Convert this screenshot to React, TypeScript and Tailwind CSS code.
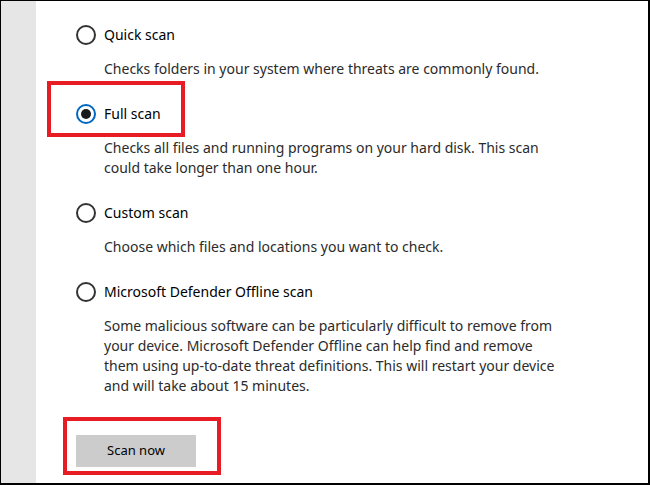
import React from 'react';

type ScanOption = {
  id: string;
  label: string;
  desc: string;
};

const options: ScanOption[] = [
  { id: 'quick', label: 'Quick scan', desc: 'Checks folders in your system where threats are commonly found.' },
  {
    id: 'full',
    label: 'Full scan',
    desc: 'Checks all files and running programs on your hard disk. This scan could take longer than one hour.',
  },
  { id: 'custom', label: 'Custom scan', desc: 'Choose which files and locations you want to check.' },
  {
    id: 'offline',
    label: 'Microsoft Defender Offline scan',
    desc: 'Some malicious software can be particularly difficult to remove from your device. Microsoft Defender Offline can help find and remove them using up-to-date threat definitions. This will restart your device and will take about 15 minutes.',
  },
];

const Radio: React.FC<{ checked: boolean }> = ({ checked }) =>
  checked ? (
    <span className="w-5 h-5 rounded-full border-2 border-[#0067c0] flex items-center justify-center shrink-0">
      <span className="w-[10px] h-[10px] rounded-full bg-[#1a1a1a]"></span>
    </span>
  ) : (
    <span className="w-5 h-5 rounded-full border-2 border-[#333333] shrink-0"></span>
  );

const App: React.FC = () => {
  const selected = 'full';

  return (
    <div
      className="relative w-[650px] h-[485px] bg-white border-t border-l border-r-2 border-b-2 border-black flex overflow-hidden"
      style={{ fontFamily: '"Segoe UI", "Noto Sans", "Open Sans", sans-serif' }}
    >
      <div className="w-[35px] bg-[#e6e6e6] shrink-0"></div>

      <div className="pl-[40px] pt-[24px] flex flex-col">
        {options.map((opt, i) => (
          <div key={opt.id} className={i > 0 ? 'mt-[25px]' : ''}>
            <label className="flex items-center gap-2 h-5">
              <Radio checked={opt.id === selected} />
              <span className="text-[14px] leading-5 text-black">{opt.label}</span>
            </label>
            <p className="ml-7 mt-[14px] w-[462px] text-[14px] leading-5 text-[#2b2b2b]">{opt.desc}</p>
          </div>
        ))}

        <button className="mt-[39px] w-[120px] h-8 bg-[#cccccc] text-[13px] text-black">Scan now</button>
      </div>

      {/* callout boxes */}
      <div className="absolute left-[46px] top-[80px] w-[138px] h-[56px] border-4 border-[#e81c24]"></div>
      <div className="absolute left-[62px] top-[416px] w-[158px] h-[58px] border-4 border-[#e81c24]"></div>
    </div>
  );
};

export default App;
